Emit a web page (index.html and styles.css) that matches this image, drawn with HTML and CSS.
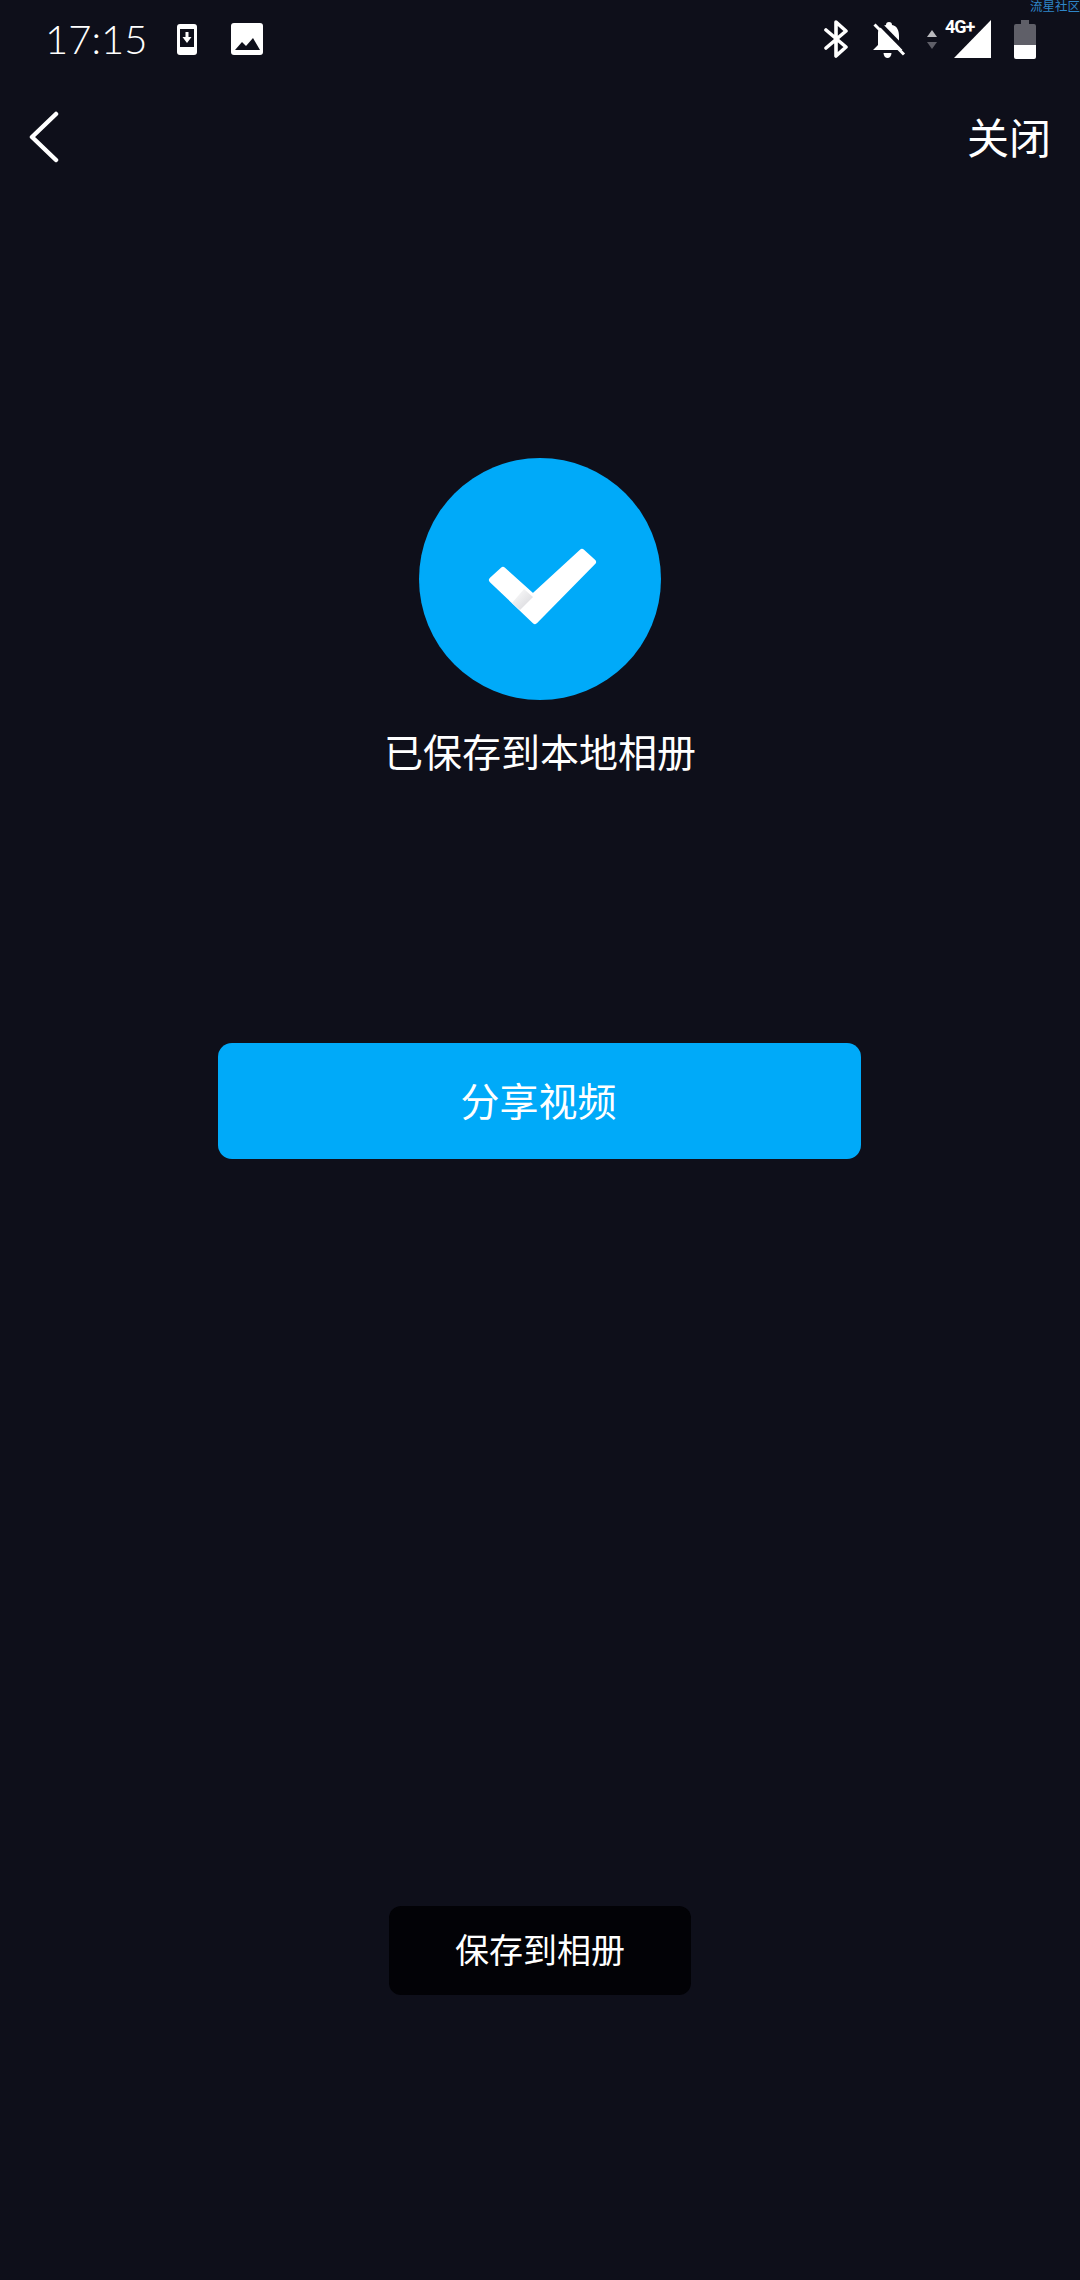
FILE: index.html
```html
<!DOCTYPE html>
<html>
<head>
    <title>已保存到本地相册</title>
    <link rel="stylesheet" href="styles.css">
</head>
<body>
    <div class="watermark">流星社区</div>

    <div class="status-bar">
        <div class="status-left">
            <span class="time">17:15</span>
            <svg class="icon-phone" width="20" height="31" viewBox="0 0 20 31">
                <rect width="20" height="31" rx="3" fill="#fff"/>
                <rect x="3" y="5" width="14" height="18" fill="#0e0f1a"/>
                <path d="M8.500 8h3v5h3L10 19l-4.500-6h3z" fill="#fff"/>
            </svg>
            <svg class="icon-picture" width="32" height="32" viewBox="0 0 32 32">
                <rect width="32" height="32" rx="3" fill="#fff"/>
                <path d="M4 27l7-8 4 4 7-8 7 12z" fill="#0e0f1a"/>
            </svg>
        </div>
        <div class="status-right">
            <svg class="icon-bluetooth" width="24" height="38" viewBox="0 0 24 38">
                <path d="M2 10l20 17-10 9V2l10 9L2 28" fill="none" stroke="#fff" stroke-width="3.600" stroke-linecap="round" stroke-linejoin="round"/>
            </svg>
            <svg class="icon-bell" width="33" height="38" viewBox="0 0 33 38">
                <path d="M16 2c2 0 3 1 3 3 5 1 7 5 7 11v9l4 5H0l5-5V13c0-4 3-7 8-8 0-2 1-3 3-3z" fill="#fff"/>
                <path d="M10.500 33h8c0 3-2 5-4 5s-4-2-4-5z" fill="#fff"/>
                <path d="M4.500 1.500l29.500 30" stroke="#0e0f1a" stroke-width="4"/>
                <path d="M1.500 4.500l29.500 30" stroke="#fff" stroke-width="3"/>
            </svg>
            <svg class="icon-arrows" width="10" height="19" viewBox="0 0 10 19">
                <path d="M5 0l5 7H0z" fill="#b9b9bd"/>
                <path d="M5 19l5-7H0z" fill="#5f5f68"/>
            </svg>
            <div class="signal">
                <svg width="37" height="38" viewBox="0 0 37 38">
                    <path d="M37 0v38H0z" fill="#fff"/>
                </svg>
                <span class="network">4G+</span>
            </div>
            <svg class="icon-battery" width="22" height="39" viewBox="0 0 22 39">
                <path d="M7 0h8v4h5a2 2 0 0 1 2 2v19H0V6a2 2 0 0 1 2-2h5z" fill="#5f5f68"/>
                <path d="M0 25h22v12a2 2 0 0 1-2 2H2a2 2 0 0 1-2-2z" fill="#fff"/>
            </svg>
        </div>
    </div>

    <div class="nav-bar">
        <svg class="icon-back" width="30" height="52" viewBox="0 0 30 52">
            <path d="M27 3L3 26l24 23" fill="none" stroke="#fff" stroke-width="4.500" stroke-linecap="round" stroke-linejoin="round"/>
        </svg>
        <span class="nav-close">关闭</span>
    </div>

    <div class="content">
        <div class="check-circle">
            <svg width="242" height="242" viewBox="0 0 242 242">
                <defs>
                    <linearGradient id="fold" x1="0" y1="0" x2="1" y2="1">
                        <stop offset="0" stop-color="#fff"/>
                        <stop offset="1" stop-color="#d4d4d8"/>
                    </linearGradient>
                </defs>
                <path d="M73 122l11-10 30 27 49-45 11 10-58 59z" fill="#fff" stroke="#fff" stroke-width="6" stroke-linejoin="round"/>
                <path d="M105 131l9 8-13 13-8-7z" fill="url(#fold)"/>
            </svg>
        </div>
        <div class="saved-text">已保存到本地相册</div>
        <button class="share-btn">分享视频</button>
        <button class="save-btn">保存到相册</button>
    </div>
</body>
</html>
```

FILE: styles.css
```css
body {
    margin: 0;
    width: 1080px;
    height: 2280px;
    overflow: hidden;
    background-color: #0e0f1a;
    color: white;
    font-family: "Noto Sans CJK SC", "Noto Sans", sans-serif;
    position: relative;
}

.watermark {
    position: absolute;
    top: -2px;
    right: 0;
    font-size: 12.500px;
    line-height: 16px;
    color: #2f86c9;
}

.status-bar {
    height: 80px;
    display: flex;
    justify-content: space-between;
    align-items: flex-start;
    box-sizing: border-box;
    padding: 20px 44px 0 45px;
}

.status-left {
    display: flex;
    align-items: center;
    height: 38px;
}

.time {
    font-family: "Lato", sans-serif;
    font-weight: 300;
    font-size: 40px;
    line-height: 38px;
    width: 132px;
}

.icon-picture {
    margin-left: 34px;
}

.status-right {
    display: flex;
    align-items: flex-start;
}

.icon-bell {
    margin-left: 25px;
}

.icon-arrows {
    margin-left: 21px;
    margin-top: 10px;
}

.signal {
    position: relative;
    margin-left: 17px;
    height: 38px;
}

.network {
    position: absolute;
    top: -3px;
    left: -9px;
    font-family: "Roboto", sans-serif;
    font-weight: 700;
    font-size: 18px;
    letter-spacing: -1px;
    line-height: 20px;
    white-space: nowrap;
}

.icon-battery {
    margin-left: 23px;
}

.nav-bar {
    height: 114px;
    display: flex;
    justify-content: space-between;
    align-items: center;
    box-sizing: border-box;
    padding: 0 29px;
}

.nav-close {
    font-size: 42px;
    line-height: 50px;
    margin-top: -2px;
}

.content {
    display: flex;
    flex-direction: column;
    align-items: center;
}

.check-circle {
    width: 242px;
    height: 242px;
    margin-top: 264px;
    border-radius: 50%;
    background-color: #00aaf9;
}

.saved-text {
    margin-top: 25px;
    font-size: 39px;
    line-height: 50px;
}

button {
    border: none;
    color: white;
    font-family: inherit;
    padding: 0 0 4px;
}

.share-btn {
    width: 643px;
    height: 116px;
    margin-top: 268px;
    margin-right: 1px;
    padding-right: 2px;
    border-radius: 14px;
    background-color: #00aaf9;
    font-size: 39px;
}

.save-btn {
    width: 302px;
    height: 89px;
    margin-top: 747px;
    border-radius: 12px;
    background-color: #020206;
    font-size: 34px;
}
```
